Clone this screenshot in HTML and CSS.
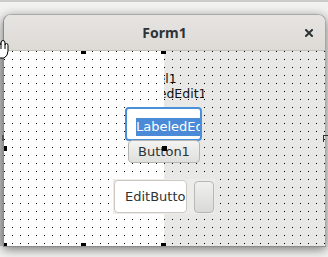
FILE: index.html
```html
<!DOCTYPE html>
<html lang="en">
  <head>
    <meta charset="UTF-8" />
    <title>Form1</title>
    <link rel="stylesheet" href="styles.css">
  </head>
  <body>
    <div class="desktop">
      <div class="window">
        <div class="titlebar">
          <span></span>
          <span class="title">Form1</span>
          <span class="close">
            <svg width="8" height="8" viewBox="0 0 8 8">
              <path d="M1 1 L7 7 M7 1 L1 7" stroke="#2e3436" stroke-width="2" stroke-linecap="square" fill="none"/>
            </svg>
          </span>
        </div>
        <div class="form">
          <span class="label" id="label1">Label1</span>
          <span class="label" id="label2">LabeledEdit1</span>
          <div class="panel"></div>
          <div class="labeled-edit"><span class="selected">LabeledEdit1</span></div>
          <div class="button" id="button1">Button1</div>
          <div class="edit-button">
            <div class="eb-edit">EditButton1</div>
            <div class="eb-btn"></div>
          </div>
          <div class="grabbers">
            <i class="grab" style="left:-2px;top:-2px"></i>
            <i class="grab" style="left:77px;top:-2px"></i>
            <i class="grab" style="left:157px;top:-2px"></i>
            <i class="grab" style="left:-2px;top:95px"></i>
            <i class="grab" style="left:158px;top:95px"></i>
            <i class="grab" style="left:-2px;top:192px"></i>
            <i class="grab" style="left:77px;top:192px"></i>
            <i class="grab" style="left:157px;top:192px"></i>
          </div>
        </div>
      </div>
      <div class="edge-strip"></div>
      <div class="edge-mark"></div>
      <div class="corner-mark"></div>
      <svg class="cursor" width="14" height="22" viewBox="0 0 14 22">
        <path d="M-3 8 Q-3 4 0 4 Q1 4 1 6 L1 4 Q1 1.5 3 1.5 Q5 1.5 5 4 L5 6 Q5 4.5 6.5 4.5 Q8 4.5 8 6.5 L8 12 Q8 17 4 19 L-3 19 Z" fill="#fff" stroke="#000" stroke-width="1"/>
        <path d="M1 6 V10 M5 6 V10" stroke="#000" stroke-width="1"/>
      </svg>
    </div>
  </body>
</html>
```

FILE: styles.css
```css
body {
  margin: 0;
  width: 328px;
  height: 257px;
  overflow: hidden;
  background: #f2f2f1;
  font-family: "DejaVu Sans", sans-serif;
}

.desktop {
  position: relative;
  height: 255px;
  padding-top: 12px;
  border-top: 2px solid #cbcbcb;
  box-sizing: border-box;
}

.window {
  margin-left: 3px;
  width: 321px;
  border: 1px solid #a9a9a9;
  border-left-color: #8a8a8a;
  border-bottom: none;
  border-radius: 8px 8px 0 0;
  overflow: hidden;
  box-shadow: 0 1px 0 #8c8c8c, 0 3px 11px rgba(0, 0, 0, 0.55);
  position: relative;
  z-index: 1;
}

.titlebar {
  height: 35px;
  display: grid;
  grid-template-columns: 1fr auto 1fr;
  align-items: center;
  background: linear-gradient(#e6e4e1, #dddad6);
  border-bottom: 1px solid #c3c0bc;
}

.title {
  font-family: "Noto Sans", sans-serif;
  font-weight: 700;
  font-size: 14px;
  color: #2e3436;
}

.close {
  justify-self: end;
  margin-right: 12px;
  display: flex;
}

.form {
  position: relative;
  height: 195px;
  overflow: hidden;
  background-color: #e8e8e7;
  background-image: conic-gradient(at 1px 1px, transparent 75%, #000 0);
  background-size: 8px 8px;
  background-position: 0 0;
}

.panel {
  position: absolute;
  left: 0;
  top: 0;
  width: 160px;
  height: 100%;
  background-color: #fff;
  background-image: conic-gradient(at 1px 1px, transparent 75%, #000 0);
  background-size: 8px 8px;
  z-index: 1;
}

.label {
  position: absolute;
  font-size: 12.5px;
  line-height: 15px;
  color: #111;
  white-space: nowrap;
  overflow: hidden;
}

#label1 {
  left: 131px;
  top: 20px;
}

#label2 {
  left: 121px;
  top: 35px;
  width: 79px;
}

.labeled-edit {
  position: absolute;
  left: 121px;
  top: 56px;
  width: 77px;
  height: 34px;
  box-sizing: border-box;
  border: 2px solid #4a90d9;
  border-radius: 4px;
  background: #fff;
  padding: 7px 0 0 9px;
  overflow: hidden;
  white-space: nowrap;
  z-index: 2;
}

.selected {
  display: inline-block;
  background: #4a8ad6;
  color: #fff;
  font-size: 13px;
  line-height: 18px;
}

.button {
  position: absolute;
  box-sizing: border-box;
  border: 1px solid #b6b6b3;
  border-radius: 4px;
  background: linear-gradient(#f3f3f2, #dfdfdd);
  color: #2e3436;
  font-size: 13px;
  text-align: center;
  z-index: 3;
}

#button1 {
  left: 124px;
  top: 89px;
  width: 72px;
  height: 23px;
  line-height: 21px;
}

.edit-button {
  position: absolute;
  left: 109px;
  top: 128px;
  width: 102px;
  height: 35px;
  display: flex;
  gap: 7px;
  align-items: center;
  padding-left: 1px;
  box-sizing: border-box;
  background: #ececeb;
  z-index: 2;
}

.eb-edit {
  width: 73px;
  height: 33px;
  box-sizing: border-box;
  border: 1px solid #cdc7c2;
  border-radius: 4px;
  background: #fff;
  padding-left: 10px;
  font-size: 13px;
  line-height: 31px;
  color: #2e3436;
  white-space: nowrap;
  overflow: hidden;
}

.eb-btn {
  width: 20px;
  height: 32px;
  box-sizing: border-box;
  border: 1px solid #b8b8b5;
  border-radius: 4px;
  background: linear-gradient(#f0f0ef, #d9d9d7);
}

.grabbers {
  position: absolute;
  inset: 0;
  z-index: 5;
}

.grab {
  position: absolute;
  width: 5px;
  height: 5px;
  background: #000;
}

.edge-strip {
  position: absolute;
  left: 0;
  top: 49px;
  width: 3px;
  height: 195px;
  background: #c6c6c6;
}

.edge-mark {
  position: absolute;
  left: 2px;
  top: 133px;
  width: 2px;
  height: 6px;
  background: #555;
  z-index: 2;
}

.corner-mark {
  position: absolute;
  left: 323px;
  top: 133px;
  width: 6px;
  height: 6px;
  border-top: 1px solid #333;
  border-left: 1px solid #333;
  z-index: 2;
}

.cursor {
  position: absolute;
  left: 0;
  top: 37px;
  z-index: 6;
}
```
